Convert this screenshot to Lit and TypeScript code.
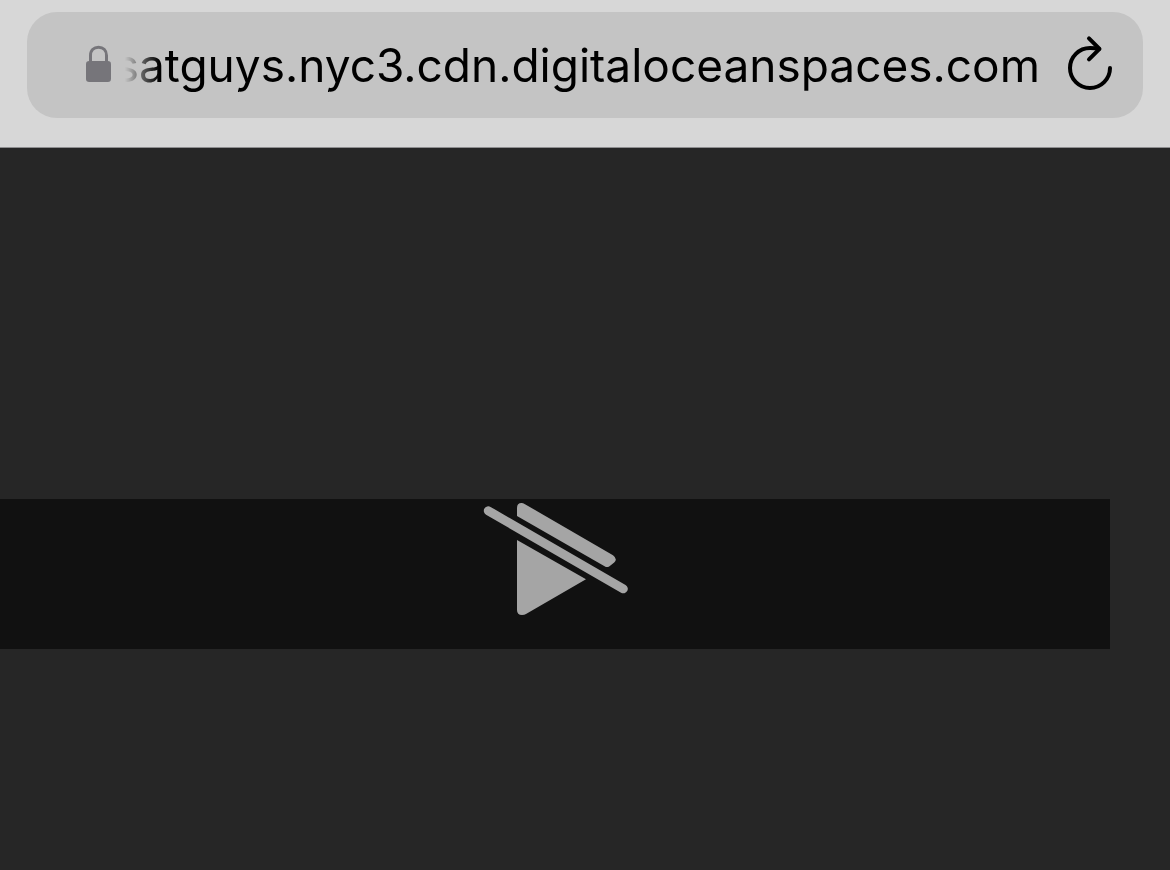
import { LitElement, html, css } from "lit";
import { customElement, property } from "lit/decorators.js";

@customElement("address-bar")
class AddressBar extends LitElement {
  @property() host = "";

  static styles = css`
    :host {
      display: block;
      padding: 12px 27px 29px;
      background: #d7d7d7;
      border-bottom: 1px solid #8e8e90;
    }
    .field {
      display: flex;
      align-items: center;
      height: 106px;
      padding: 0 28px 0 56px;
      box-sizing: border-box;
      border-radius: 30px;
      background: #c4c4c4;
    }
    .lock {
      flex: none;
      width: 28px;
      height: 40px;
    }
    .url {
      flex: 1;
      min-width: 0;
      height: 64px;
      margin: 0 25px 0 0;
      padding: 0;
      border: 0;
      outline: 0;
      background: none;
      color: #000;
      font: 400 46px/64px Inter, "Liberation Sans", sans-serif;
      text-align: right;
      -webkit-mask-image: linear-gradient(to right, transparent 14px, #000 48px);
      mask-image: linear-gradient(to right, transparent 14px, #000 48px);
    }
    .reload {
      flex: none;
      display: flex;
      padding: 0;
      border: 0;
      background: none;
      color: #000;
    }
    .reload svg {
      width: 50px;
      height: 60px;
    }
  `;

  render() {
    return html`
      <div class="field">
        <svg class="lock" viewBox="83 45 28 40" aria-hidden="true">
          <path d="M90.5 63V55.5C90.5 50 94 47.2 98.5 47.2S106.5 50 106.5 55.5V63" fill="none" stroke="#76757a" stroke-width="3" />
          <rect x="86" y="61" width="25" height="21" rx="3.2" fill="#76757a" />
        </svg>
        <input class="url" type="text" readonly aria-label="Address" .value=${this.host} />
        <button class="reload" type="button" aria-label="Reload">
          <svg viewBox="1065 35 50 60" fill="none" stroke="currentColor" stroke-width="4" stroke-linecap="round" stroke-linejoin="round">
            <path d="M1110 68A20 20 0 1 1 1090 48Q1095 48 1099 49" />
            <path d="M1089 38.3L1099.5 48.9L1089 59.3" />
          </svg>
        </button>
      </div>
    `;
  }
}

@customElement("video-stage")
class VideoStage extends LitElement {
  static styles = css`
    :host {
      display: grid;
      grid-template-rows: 351fr auto 221fr;
      background: #262626;
    }
    .player {
      grid-row: 2;
      display: flex;
      justify-content: center;
      height: 150px;
      margin-right: 60px;
      background: #111;
    }
    .unplayable {
      width: 148px;
      height: 120px;
    }
  `;

  render() {
    return html`
      <div class="player">
        <svg class="unplayable" viewBox="481 499 148 120" fill="#a5a5a5" role="img" aria-label="Video cannot be played">
          <path d="M488.3 510.8L623.3 588.8" stroke="#a5a5a5" stroke-width="9" stroke-linecap="round" />
          <path d="M517 516V508Q517 503 521.5 503Q523 503 525 504.2L613 555.2Q618 559 614.2 562.5L609.5 566.2Q607 567.8 605 566.6Z" />
          <path d="M517 540L586 579.3L526 614Q524.5 615 522 615Q517 615 517 610Z" />
        </svg>
      </div>
    `;
  }
}

@customElement("app-root")
class AppRoot extends LitElement {
  static styles = css`
    :host {
      display: flex;
      flex-direction: column;
      min-height: 100vh;
    }
    video-stage {
      flex: 1;
    }
  `;

  render() {
    return html`
      <address-bar host="satguys.nyc3.cdn.digitaloceanspaces.com"></address-bar>
      <video-stage></video-stage>
    `;
  }
}
